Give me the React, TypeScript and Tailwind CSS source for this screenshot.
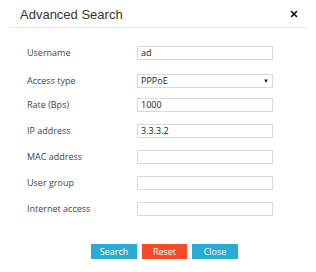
import { X } from 'lucide-react'

const FIELDS: { label: string; value: string; select?: boolean }[] = [
  { label: 'Username', value: 'ad' },
  { label: 'Access type', value: 'PPPoE', select: true },
  { label: 'Rate (Bps)', value: '1000' },
  { label: 'IP address', value: '3.3.3.2' },
  { label: 'MAC address', value: '' },
  { label: 'User group', value: '' },
  { label: 'Internet access', value: '' },
]

export default function App() {
  return (
    <div className="w-[316px] h-[272px] bg-white font-['Open_Sans',sans-serif] text-[#333]">
      {/* Header */}
      <div className="mx-[10px] h-[28px] flex items-center justify-between border-b border-[#e5e5e5] pl-[10px] pr-[7px]">
        <h2 className="font-['Liberation_Sans',Arial,sans-serif] text-[13px] text-[#333] pt-[2px]">Advanced Search</h2>
        <X className="w-[10px] h-[10px] text-black" strokeWidth={3.5} />
      </div>

      {/* Form */}
      <div className="mt-[12px] pl-[27px]">
        {FIELDS.map((f) => (
          <div key={f.label} className={`flex items-center h-[26px] ${f.select ? 'pt-[4px]' : ''}`}>
            <span className="w-[110px] text-[9px] text-[#444]">{f.label}</span>
            <div className="w-[136px] h-[14px] border border-[#d9d9d9] flex items-center justify-between px-[3px] text-[9px] text-[#222]">
              <span>{f.value}</span>
              {f.select && <span className="text-[6px] text-[#222]">▼</span>}
            </div>
          </div>
        ))}
      </div>

      {/* Buttons */}
      <div className="mt-[22px] pl-[13px] flex justify-center gap-[5px] text-[9px] text-white">
        <button className="w-[46px] h-[15px] bg-[#2aaad4]">Search</button>
        <button className="w-[45px] h-[15px] bg-[#f64b28]">Reset</button>
        <button className="w-[46px] h-[15px] bg-[#2aaad4]">Close</button>
      </div>
    </div>
  )
}
